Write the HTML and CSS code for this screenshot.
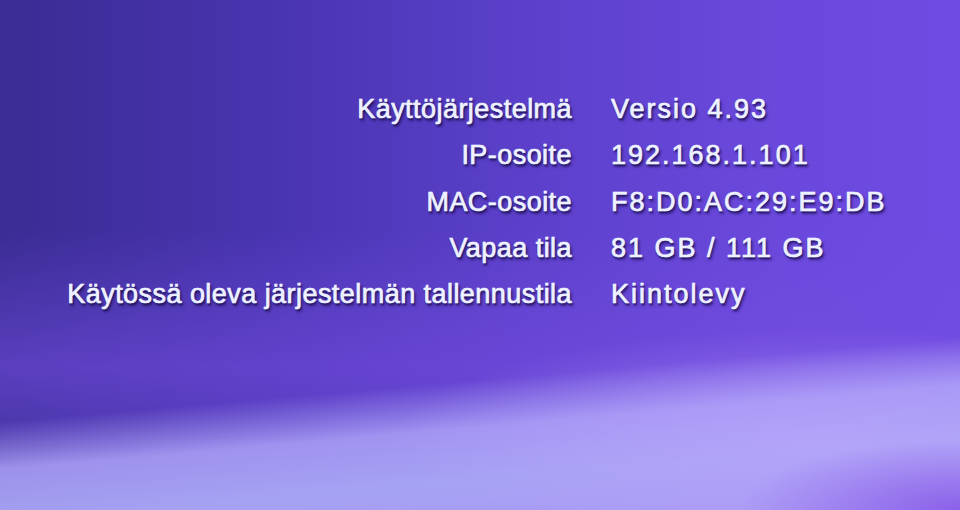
FILE: index.html
```html
<!DOCTYPE html>
<html lang="fi">
<head>
<meta charset="utf-8">
<title>Järjestelmätiedot</title>
<link rel="stylesheet" href="styles.css">
</head>
<body>
<main class="screen">
  <dl class="info">
    <dt class="label">Käyttöjärjestelmä</dt>
    <dd class="value">Versio 4.93</dd>
    <dt class="label">IP-osoite</dt>
    <dd class="value">192.168.1.101</dd>
    <dt class="label">MAC-osoite</dt>
    <dd class="value">F8:D0:AC:29:E9:DB</dd>
    <dt class="label">Vapaa tila</dt>
    <dd class="value">81 GB / 111 GB</dd>
    <dt class="label">Käytössä oleva järjestelmän tallennustila</dt>
    <dd class="value">Kiintolevy</dd>
  </dl>
</main>
</body>
</html>
```

FILE: styles.css
```css
html, body {
  margin: 0;
  padding: 0;
  width: 960px;
  height: 510px;
  overflow: hidden;
}

.screen {
  width: 960px;
  height: 510px;
  box-sizing: border-box;
  padding-top: 86px;
  background:
    radial-gradient(ellipse 220px 70px at 100% 100%, rgba(128, 78, 228, 0.75), rgba(128, 78, 228, 0) 100%),
    radial-gradient(ellipse 420px 110px at 85% 86%, rgba(190, 165, 252, 0.55), rgba(190, 165, 252, 0) 100%),
    linear-gradient(175deg, rgba(170, 160, 248, 0) 0%, rgba(170, 160, 248, 0) 71%, rgba(172, 162, 248, 0.85) 79%, rgba(170, 168, 246, 0.95) 88%, rgba(176, 160, 248, 0.9) 100%),
    linear-gradient(180deg, rgba(110, 70, 220, 0) 0%, rgba(110, 70, 220, 0) 45%, rgba(118, 78, 226, 0.55) 72%, rgba(118, 78, 226, 0.0) 100%),
    linear-gradient(90deg, #392c93 0%, #4934b0 28%, #5c40cb 55%, #6a48dc 80%, #6e4be2 100%);
  font-family: "Liberation Sans", Arial, sans-serif;
}

.info {
  margin: 0;
  display: grid;
  grid-template-columns: 572px auto;
  column-gap: 39px;
  grid-auto-rows: 46.3px;
  align-items: center;
}

.label,
.value {
  margin: 0;
  font-size: 27px;
  line-height: 46px;
  color: #eef1ff;
  white-space: nowrap;
  -webkit-text-stroke: 0.55px #eef1ff;
  text-shadow:
    0 0 1px rgba(190, 200, 255, 0.9),
    1px 2px 2px rgba(22, 12, 70, 0.85),
    2px 3px 3px rgba(22, 12, 70, 0.45);
}

.label {
  text-align: right;
  letter-spacing: 0.45px;
}

.value {
  text-align: left;
  letter-spacing: 2px;
}
```
